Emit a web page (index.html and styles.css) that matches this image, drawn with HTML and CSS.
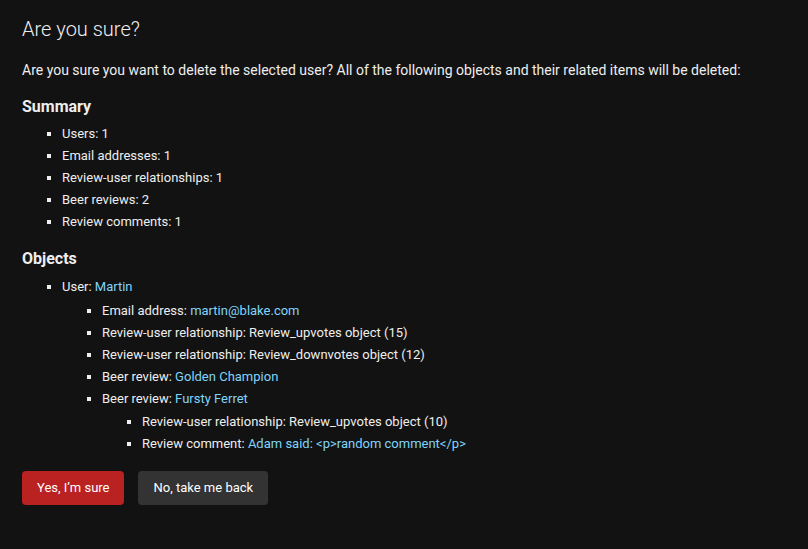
FILE: index.html
```html
<!DOCTYPE html>
<html lang="en">
<head>
<meta charset="utf-8">
<title>Are you sure?</title>
<link rel="stylesheet" href="styles.css">
</head>
<body>
<div class="content">
  <h1>Are you sure?</h1>
  <p class="intro">Are you sure you want to delete the selected user? All of the following objects and their related items will be deleted:</p>
  <h2>Summary</h2>
  <ul class="list">
    <li>Users: 1</li>
    <li>Email addresses: 1</li>
    <li>Review-user relationships: 1</li>
    <li>Beer reviews: 2</li>
    <li>Review comments: 1</li>
  </ul>
  <h2>Objects</h2>
  <ul class="list">
    <li>User: <a href="#">Martin</a>
      <ul class="list nested">
        <li>Email address: <a href="#">martin@blake.com</a></li>
        <li>Review-user relationship: Review_upvotes object (15)</li>
        <li>Review-user relationship: Review_downvotes object (12)</li>
        <li>Beer review: <a href="#">Golden Champion</a></li>
        <li>Beer review: <a href="#">Fursty Ferret</a>
          <ul class="list nested">
            <li>Review-user relationship: Review_upvotes object (10)</li>
            <li>Review comment: <a href="#">Adam said: &lt;p&gt;random comment&lt;/p&gt;</a></li>
          </ul>
        </li>
      </ul>
    </li>
  </ul>
  <form class="actions">
    <button type="button" class="btn btn-danger">Yes, I’m sure</button>
    <a href="#" class="btn btn-cancel">No, take me back</a>
  </form>
</div>
</body>
</html>
```

FILE: styles.css
```css
html, body {
  margin: 0;
  padding: 0;
  background: #121212;
}
body {
  font-family: Roboto, "Liberation Sans", sans-serif;
  font-size: 14px;
  color: #eeeeee;
}
.content {
  padding: 17px 22px 20px 22px;
}
h1 {
  margin: 0 0 20px;
  font-weight: 300;
  font-size: 20px;
  line-height: 24px;
  color: #eeeeee;
}
.intro {
  margin: 0 0 16px;
  font-size: 14px;
  line-height: 19.6px;
}
h2 {
  margin: 17px 0 7px;
  font-size: 16px;
  line-height: 18.75px;
  font-weight: bold;
}
.list {
  margin: 2.8px 0 11.2px;
  padding-left: 40px;
}
.list > li {
  list-style-type: square;
  padding: 1px 0;
  font-size: 13px;
  line-height: 20px;
}
.list.nested {
  margin: 2.6px 0 0;
}
a {
  color: #81d4fa;
  text-decoration: none;
}
.actions {
  display: flex;
  gap: 14px;
  margin-top: 14px;
}
.btn {
  display: inline-block;
  font-family: Roboto, "Liberation Sans", sans-serif;
  font-size: 13px;
  line-height: 14px;
  padding: 10px 15px;
  border: none;
  border-radius: 4px;
  color: #ffffff;
  cursor: pointer;
}
.btn-danger {
  background: #ba2121;
}
.btn-cancel {
  background: #333333;
}
```
